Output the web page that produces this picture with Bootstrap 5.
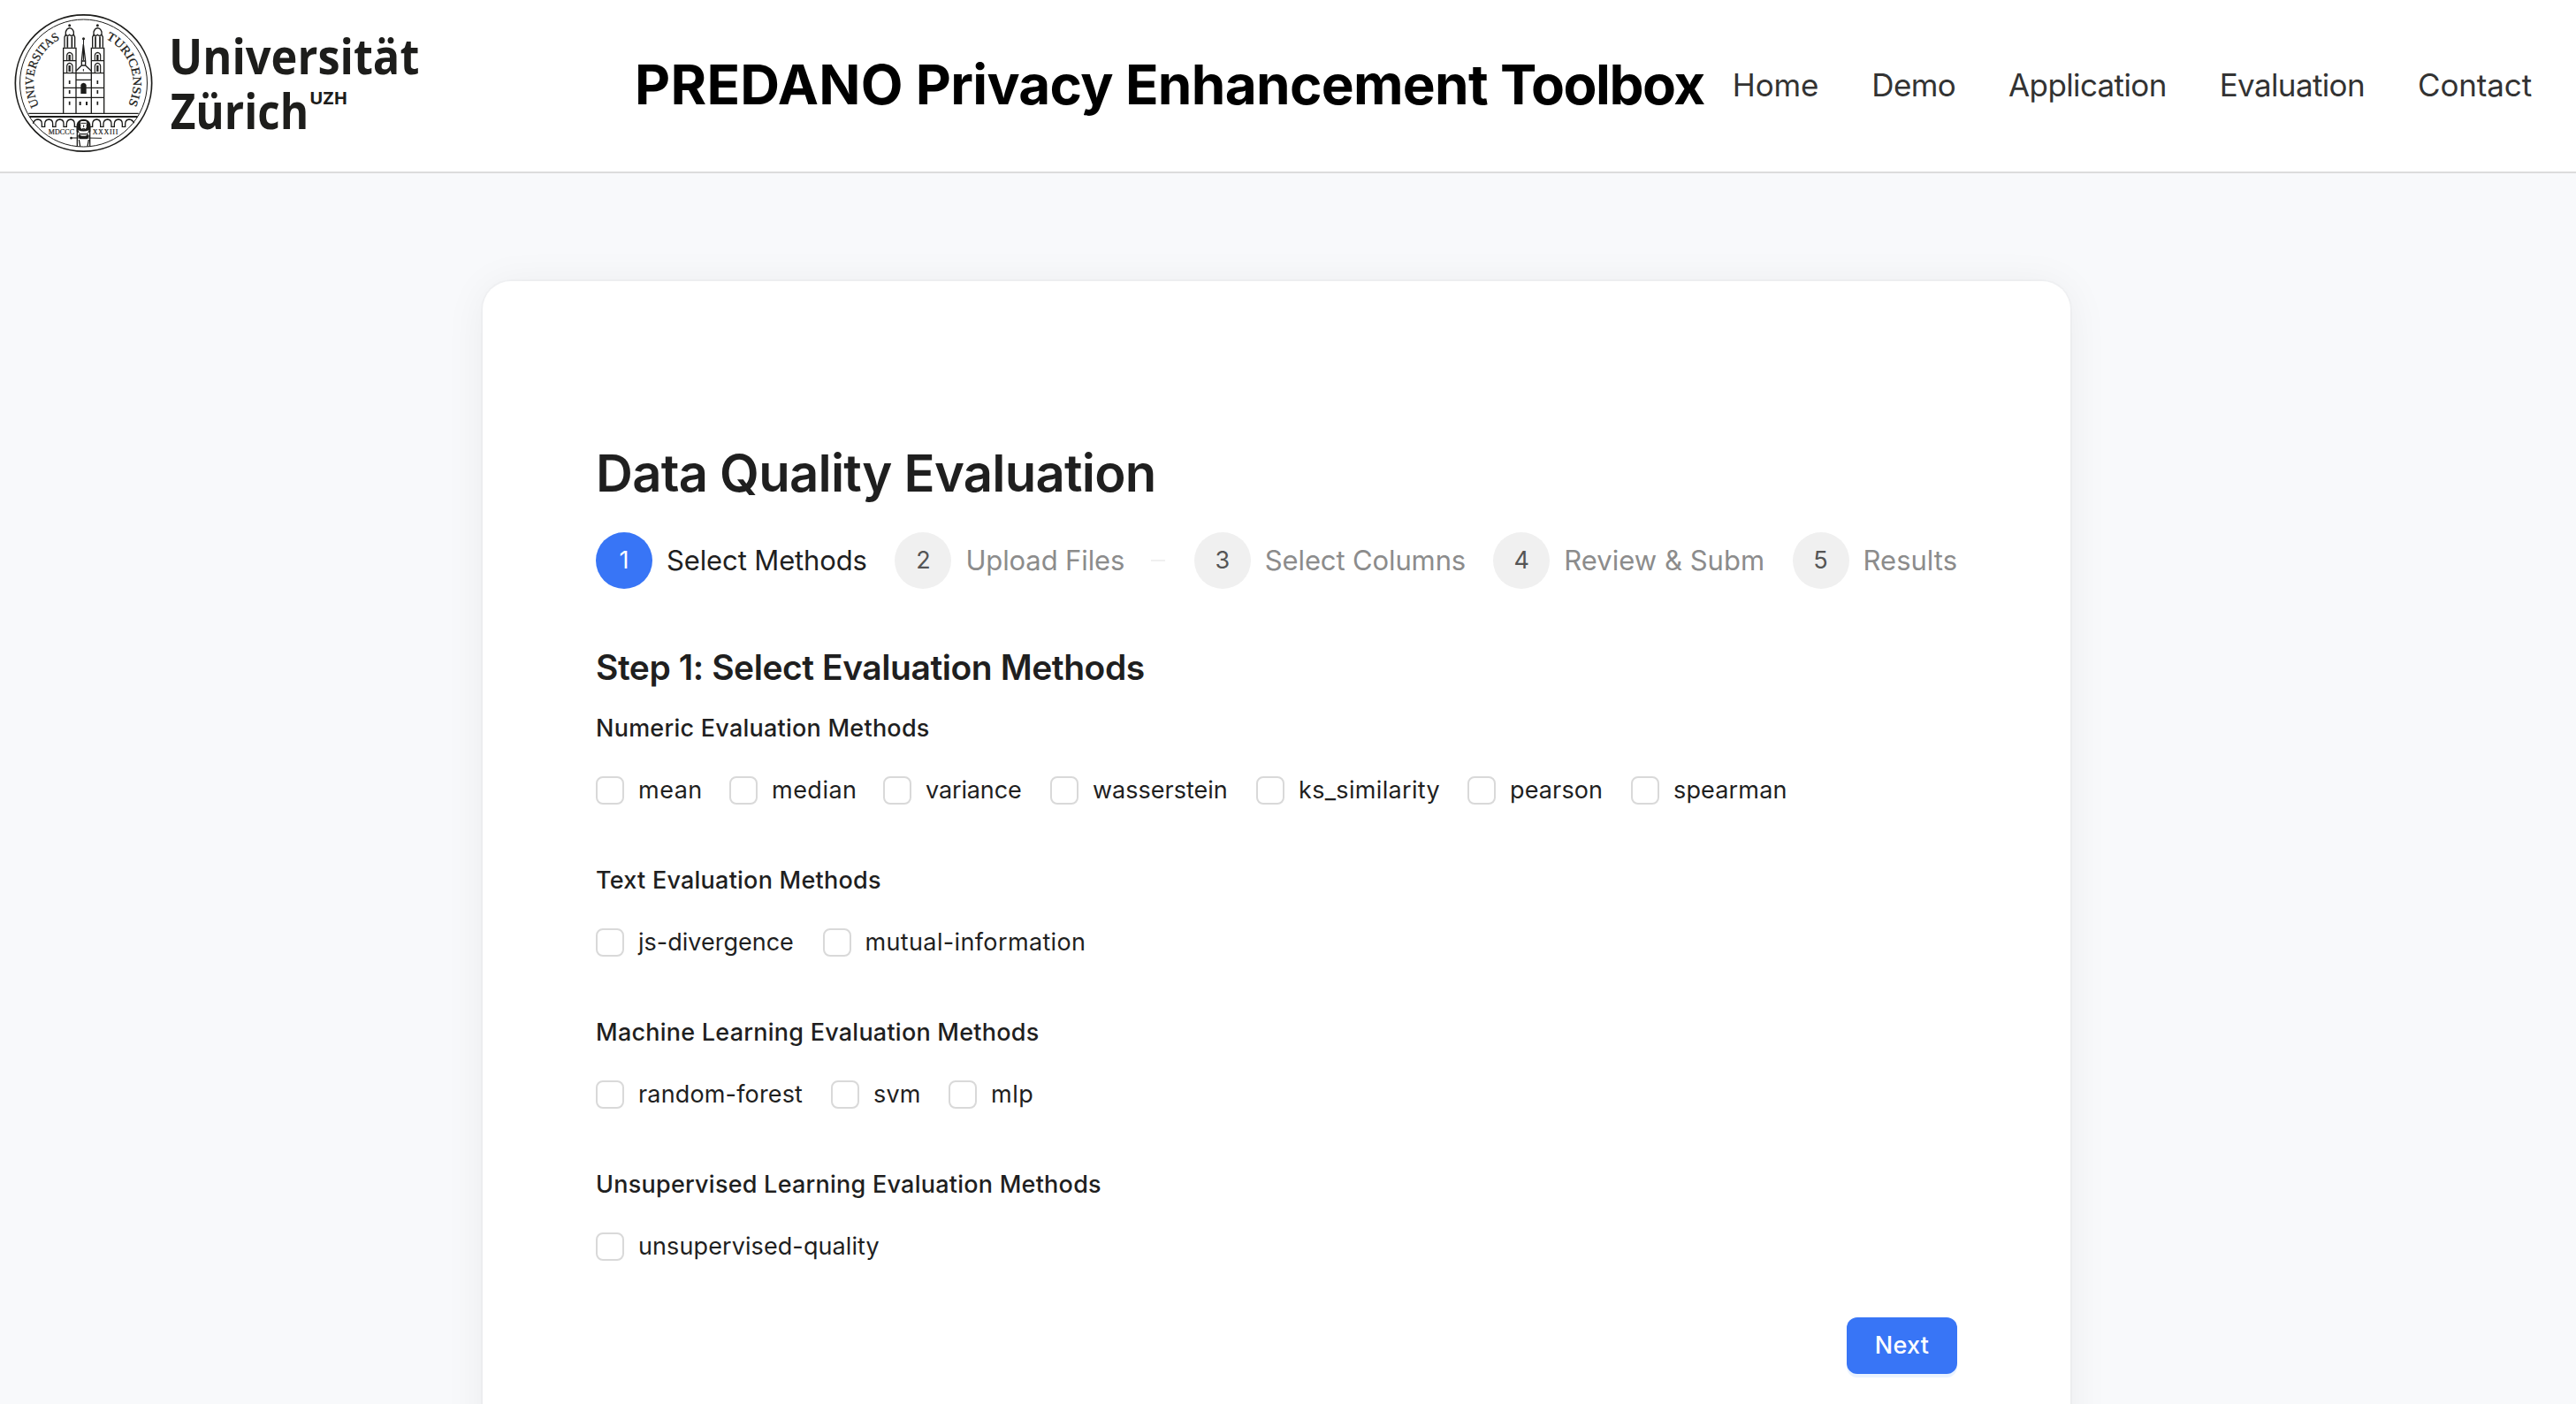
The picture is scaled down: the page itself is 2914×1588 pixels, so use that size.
<!DOCTYPE html>
<html lang="en">
<head>
<meta charset="utf-8">
<meta name="viewport" content="width=device-width, initial-scale=1">
<title>PREDANO Privacy Enhancement Toolbox</title>
<link href="https://cdn.jsdelivr.net/npm/bootstrap@5.3.0/dist/css/bootstrap.min.css" rel="stylesheet">
<style>
body { font-family: Inter, "Liberation Sans", sans-serif; background: #f8f9fb; color: #1f1f1f; }
.site-header { height: 196px; border-bottom: 2px solid #dcdcdc; background: #fff; }
.site-logo { width: 500px; height: 194px; flex: none; }
.site-title { margin: 0 0 3px 218px; font-size: 62px; line-height: 80px; font-weight: 700; letter-spacing: -.0111em; color: #000; white-space: nowrap; }
.title-lead { letter-spacing: .004em; }
.title-tail { letter-spacing: -.024em; }
.site-nav { gap: 60px; margin: 0 50px 3px auto; }
.site-nav .nav-link { padding: 0; color: #333; font-size: 35px; line-height: 50px; letter-spacing: -.004em; }
.site-nav .nav-link.snug { letter-spacing: -.018em; }
.eval-card { width: 1796px; margin: 122px 0 0 546px; padding: 181px 128px 128px; border: 0; border-radius: 32px; box-shadow: 0 0 0 2px rgba(0,0,0,.02), 0 4px 48px rgba(0,0,0,.06); }
.page-heading { margin: 0; font-size: 58px; line-height: 72px; font-weight: 600; letter-spacing: -.013em; }
.steps { margin-top: 31px; }
.step-item { width: 338.5px; gap: 16px; font-size: 31px; line-height: 64px; color: #8c8c8c; letter-spacing: -.004em; white-space: nowrap; }
.step-item:nth-child(4) { letter-spacing: .001em; }
.step-item:last-child { width: auto; letter-spacing: 0; }
.step-item.current { color: #1f1f1f; }
.step-dot { width: 64px; height: 64px; flex: none; background: #f0f0f0; color: #555; font-size: 27px; }
.current .step-dot { background: #3875f6; color: #fff; }
.step-tail { width: 16px; height: 2px; margin-left: 14px; background: #f0f0f0; }
.section-heading { margin: 61px 0 19px; font-size: 39px; line-height: 56px; font-weight: 600; letter-spacing: -.0114em; }
.method-group { margin-bottom: 64px; }
.group-heading { margin: 0 0 32px; font-size: 27px; line-height: 44px; font-weight: 500; letter-spacing: .0088em; }
.method { height: 32px; gap: 16px; margin-right: 32px; font-size: 27px; line-height: 32px; letter-spacing: .006em; white-space: nowrap; }
.method .form-check-input { width: 32px; height: 32px; margin: 0; flex: none; border: 2px solid #d9d9d9; border-radius: 8px; background-color: #fff; }
.numeric .method { margin-right: 0; }
.numeric .method:nth-child(1) { width: 151px; letter-spacing: .018em; }
.numeric .method:nth-child(2) { width: 174px; letter-spacing: .018em; }
.numeric .method:nth-child(3) { width: 189px; letter-spacing: -.005em; }
.numeric .method:nth-child(4) { width: 233px; letter-spacing: 0; }
.numeric .method:nth-child(5) { width: 239px; letter-spacing: .012em; }
.numeric .method:nth-child(6) { width: 185px; letter-spacing: .005em; }
.textual .method:nth-child(1) { width: 224.5px; letter-spacing: 0; }
.textual .method:nth-child(2) { letter-spacing: .0135em; }
.learned .method:nth-child(1) { width: 234px; }
.learned .method:nth-child(2) { width: 101px; }
.learned .method:nth-child(3) { letter-spacing: .02em; }
.unsupervised .method { letter-spacing: .0035em; }
.btn-next { width: 125px; height: 64px; padding: 0; border: 0; border-radius: 12px; background: #3875f6; color: #fff; font-size: 27px; line-height: 64px; font-weight: 500; letter-spacing: .01em; box-shadow: 0 4px 0 #eaf3ff; }
</style>
</head>
<body>
<div class="vh-100 overflow-hidden">
<header class="site-header d-flex align-items-center">
<svg class="site-logo" viewBox="0 0 1500 582" role="img" aria-label="Universität Zürich">
  <defs>
    <path id="arcLeft" d="M132.4 358.7A169 169 0 0 1 203.7 132.8"/>
    <path id="arcRight" d="M358.700 130.800A169 169 0 0 1 433.6 358.7"/>
  </defs>
  <g fill="none" stroke="#1d1d1b">
    <circle cx="283.500" cy="282" r="231.500" stroke-width="5"/>
    <circle cx="283.500" cy="282" r="216" stroke-width="3"/>
    <!-- bridge -->
    <path d="M97 385H470" stroke-width="4"/>
    <path d="M100 396H467" stroke-width="6"/>
    <path d="M112 419Q117 405 129 405Q142 406 142 420V430H152V420Q153 406 166 405Q179 406 179 420V430H189V420Q190 406 203 405Q216 406 216 420V430H226V420Q227 406 240 405Q252 406 253 420V430H262M305 430H314V420Q315 406 328 405Q341 406 341 420V430H351V420Q352 406 365 405Q378 406 378 420V430H388V420Q389 406 402 405Q415 406 415 420V430H425V420Q426 406 438 405Q450 406 455 418" stroke-width="4"/>
    <!-- towers -->
    <g id="tower" stroke-width="4">
      <path d="M215 385V163H258V385M215 206H258M215 248H258M215 298H258M215 331H258"/>
      <path d="M219 161V126L223 117V108Q226 97 236 95Q247 97 250 108V117L254 126V161M223 117Q229 125 236 118Q243 125 250 117"/>
      <path d="M229 124V161M244 124V161" stroke-width="5"/>
      <path d="M227 205V188Q228 179 236 178Q245 179 246 188V205M227 247V224Q228 215 236 214Q245 215 246 224V247" stroke-width="3.500"/>
      <path d="M236 186V204M236 222V243" stroke-width="7"/>
      <path d="M236 273V285M236 306V318M236 344V356" stroke-width="5"/>
      <circle cx="236" cy="86" r="2.500"/>
    </g>
    <use href="#tower" x="95"/>
    <!-- nave -->
    <path d="M258 241L277 222V207L283 150L290 207V222L310 241M258 248H310M258 271H310M258 298H310M258 331H310M277 207H290M277 222H290" stroke-width="4"/>
    <path d="M283.500 134V205M283 234V242" stroke-width="3"/>
    <circle cx="283.500" cy="131" r="2.500" stroke-width="4"/>
    <path d="M272 345V357M294 345V357" stroke-width="6"/>
    <path d="M242 468H272M295 468L345 469" stroke-width="3"/>
    <circle cx="241.500" cy="468.500" r="2" stroke-width="4"/>
    <path d="M262 430V497M305 430V497M272 497L268 474M297 497L301 474" stroke-width="4"/>
  </g>
  <!-- statue -->
  <g fill="#1d1d1b">
    <path d="M274 318V288Q276 282 283.500 281Q291 282 293 288V318Z"/>
    <path d="M260 446V422Q264 405 283.500 404Q303 405 307 422V446L297 452L303 462L296 472H271L264 462L270 452Z"/>
  </g>
  <g fill="#fff">
    <path d="M272 417L275 411H292L295 417L293 424H274Z"/>
    <circle cx="283.500" cy="429" r="10"/>
    <path d="M265 442Q283 449 302 442L296 453H271Z"/>
    <path d="M269 457H298L290 461H277Z"/>
  </g>
  <path d="M274 418H293M284 424V432M279 437H288" stroke="#1d1d1b" stroke-width="3"/>
  <g fill="#1d1d1b" stroke="#1d1d1b" stroke-width=".8" font-family="Liberation Serif, serif" font-size="41">
    <text><textPath href="#arcLeft" textLength="263" lengthAdjust="spacingAndGlyphs">UNIVERSITAS</textPath></text>
    <text><textPath href="#arcRight" textLength="263" lengthAdjust="spacingAndGlyphs">TURICENSIS</textPath></text>
  </g>
  <g fill="#1d1d1b" stroke="#1d1d1b" stroke-width=".6" font-family="Liberation Serif, serif" font-size="24">
    <text x="164" y="455" textLength="88">MDCCC</text>
    <text x="314" y="455" textLength="86">XXXIII</text>
  </g>
  <g fill="#1d1d1b" font-family="Open Sans, sans-serif" font-weight="700">
    <text x="573" y="253" font-size="164" textLength="850" lengthAdjust="spacingAndGlyphs">Universität</text>
    <text x="578" y="438" font-size="164" textLength="470" lengthAdjust="spacingAndGlyphs">Zürich</text>
    <text x="1050" y="354" font-size="59" textLength="130" lengthAdjust="spacingAndGlyphs">UZH</text>
  </g>
</svg>
<h1 class="site-title"><span class="title-lead">PREDANO</span> Privacy Enhancement <span class="title-tail">Toolbox</span></h1>
<nav class="site-nav nav flex-nowrap">
  <a class="nav-link" href="#">Home</a>
  <a class="nav-link snug" href="#">Demo</a>
  <a class="nav-link snug" href="#">Application</a>
  <a class="nav-link snug" href="#">Evaluation</a>
  <a class="nav-link" href="#">Contact</a>
</nav>
</header>
<main class="eval-card card">
  <h2 class="page-heading">Data Quality Evaluation</h2>
  <div class="steps d-flex">
    <div class="step-item current d-flex align-items-center"><span class="step-dot rounded-circle text-center">1</span><span>Select Methods</span></div>
    <div class="step-item d-flex align-items-center"><span class="step-dot rounded-circle text-center">2</span><span>Upload Files</span><span class="step-tail"></span></div>
    <div class="step-item d-flex align-items-center"><span class="step-dot rounded-circle text-center">3</span><span>Select Columns</span></div>
    <div class="step-item d-flex align-items-center"><span class="step-dot rounded-circle text-center">4</span><span>Review &amp; Subm</span></div>
    <div class="step-item d-flex align-items-center"><span class="step-dot rounded-circle text-center">5</span><span>Results</span></div>
  </div>
  <h3 class="section-heading">Step 1: Select Evaluation Methods</h3>
  <div>
    <section class="method-group">
      <h4 class="group-heading">Numeric Evaluation Methods</h4>
      <div class="numeric d-flex">
        <label class="method d-flex"><input class="form-check-input" type="checkbox">mean</label>
        <label class="method d-flex"><input class="form-check-input" type="checkbox">median</label>
        <label class="method d-flex"><input class="form-check-input" type="checkbox">variance</label>
        <label class="method d-flex"><input class="form-check-input" type="checkbox">wasserstein</label>
        <label class="method d-flex"><input class="form-check-input" type="checkbox">ks_similarity</label>
        <label class="method d-flex"><input class="form-check-input" type="checkbox">pearson</label>
        <label class="method d-flex"><input class="form-check-input" type="checkbox">spearman</label>
      </div>
    </section>
    <section class="method-group">
      <h4 class="group-heading">Text Evaluation Methods</h4>
      <div class="textual d-flex">
        <label class="method d-flex"><input class="form-check-input" type="checkbox">js-divergence</label>
        <label class="method d-flex"><input class="form-check-input" type="checkbox">mutual-information</label>
      </div>
    </section>
    <section class="method-group">
      <h4 class="group-heading">Machine Learning Evaluation Methods</h4>
      <div class="learned d-flex">
        <label class="method d-flex"><input class="form-check-input" type="checkbox">random-forest</label>
        <label class="method d-flex"><input class="form-check-input" type="checkbox">svm</label>
        <label class="method d-flex"><input class="form-check-input" type="checkbox">mlp</label>
      </div>
    </section>
    <section class="method-group">
      <h4 class="group-heading">Unsupervised Learning Evaluation Methods</h4>
      <div class="unsupervised d-flex">
        <label class="method d-flex"><input class="form-check-input" type="checkbox">unsupervised-quality</label>
      </div>
    </section>
  </div>
  <div class="d-flex justify-content-end">
    <button class="btn btn-next" type="button">Next</button>
  </div>
</main>
</div>
<script src="https://cdn.jsdelivr.net/npm/bootstrap@5.3.0/dist/js/bootstrap.bundle.min.js"></script>
</body>
</html>
